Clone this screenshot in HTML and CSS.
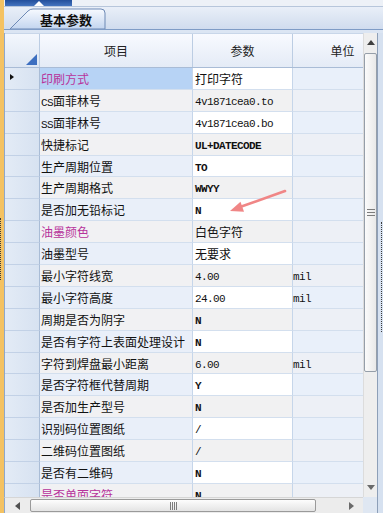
FILE: index.html
```html
<!DOCTYPE html>
<html>
<head>
<meta charset="utf-8">
<link rel="stylesheet" href="styles.css">
</head>
<body>
<div class="window">
  <div class="edge"></div>
  <div class="main">
    <div class="topbar"><div class="bluebar"><span class="caret"></span></div></div>
    <div class="tabstrip">
      <div class="tab">
        <svg class="tabshape" width="98" height="22" viewBox="0 0 98 22">
          <defs>
            <linearGradient id="tg" x1="0" y1="0" x2="0" y2="1">
              <stop offset="0" stop-color="#f7faff"/>
              <stop offset="1" stop-color="#c3d5ef"/>
            </linearGradient>
          </defs>
          <path d="M1 22 L19 4 Q21 2 24 2 L92 2 Q96 2 96 6 L96 22 Z" fill="url(#tg)" stroke="#6d89b5" stroke-width="1"/>
        </svg>
        <span class="tabtext">基本参数</span>
      </div>
    </div>
    <div class="panel">
      <div class="grid">
        <div class="view">
          <div class="hdr">
            <div class="h-rh"><span class="corner"></span></div>
            <div class="h-item">项目</div>
            <div class="h-val">参数</div>
            <div class="h-unit">单位</div>
          </div>
          <div class="rows">
            <div class="row odd"><div class="rh"><span class="ind"></span></div><div class="c-item sel hl">印刷方式</div><div class="c-val">打印字符</div><div class="c-unit"></div></div>
            <div class="row even"><div class="rh"></div><div class="c-item"><span class="m">CS</span>面菲林号</div><div class="c-val"><span class="m">4v1871cea0.to</span></div><div class="c-unit"></div></div>
            <div class="row odd"><div class="rh"></div><div class="c-item"><span class="m">SS</span>面菲林号</div><div class="c-val"><span class="m">4v1871cea0.bo</span></div><div class="c-unit"></div></div>
            <div class="row even"><div class="rh"></div><div class="c-item">快捷标记</div><div class="c-val"><span class="m b">UL+DATECODE</span></div><div class="c-unit"></div></div>
            <div class="row odd"><div class="rh"></div><div class="c-item">生产周期位置</div><div class="c-val"><span class="m b">TO</span></div><div class="c-unit"></div></div>
            <div class="row even"><div class="rh"></div><div class="c-item">生产周期格式</div><div class="c-val"><span class="m b">WWYY</span></div><div class="c-unit"></div></div>
            <div class="row odd"><div class="rh"></div><div class="c-item">是否加无铅标记</div><div class="c-val"><span class="m b">N</span></div><div class="c-unit"></div></div>
            <div class="row even"><div class="rh"></div><div class="c-item hl">油墨颜色</div><div class="c-val">白色字符</div><div class="c-unit"></div></div>
            <div class="row odd"><div class="rh"></div><div class="c-item">油墨型号</div><div class="c-val">无要求</div><div class="c-unit"></div></div>
            <div class="row even"><div class="rh"></div><div class="c-item">最小字符线宽</div><div class="c-val"><span class="m">4.00</span></div><div class="c-unit"><span class="m">mil</span></div></div>
            <div class="row odd"><div class="rh"></div><div class="c-item">最小字符高度</div><div class="c-val"><span class="m">24.00</span></div><div class="c-unit"><span class="m">mil</span></div></div>
            <div class="row even"><div class="rh"></div><div class="c-item">周期是否为阴字</div><div class="c-val"><span class="m b">N</span></div><div class="c-unit"></div></div>
            <div class="row odd"><div class="rh"></div><div class="c-item">是否有字符上表面处理设计</div><div class="c-val"><span class="m b">N</span></div><div class="c-unit"></div></div>
            <div class="row even"><div class="rh"></div><div class="c-item">字符到焊盘最小距离</div><div class="c-val"><span class="m">6.00</span></div><div class="c-unit"><span class="m">mil</span></div></div>
            <div class="row odd"><div class="rh"></div><div class="c-item">是否字符框代替周期</div><div class="c-val"><span class="m b">Y</span></div><div class="c-unit"></div></div>
            <div class="row even"><div class="rh"></div><div class="c-item">是否加生产型号</div><div class="c-val"><span class="m b">N</span></div><div class="c-unit"></div></div>
            <div class="row odd"><div class="rh"></div><div class="c-item">识别码位置图纸</div><div class="c-val"><span class="m">/</span></div><div class="c-unit"></div></div>
            <div class="row even"><div class="rh"></div><div class="c-item">二维码位置图纸</div><div class="c-val"><span class="m">/</span></div><div class="c-unit"></div></div>
            <div class="row odd"><div class="rh"></div><div class="c-item">是否有二维码</div><div class="c-val"><span class="m b">N</span></div><div class="c-unit"></div></div>
            <div class="row even"><div class="rh"></div><div class="c-item hl">是否单面字符</div><div class="c-val"><span class="m b">N</span></div><div class="c-unit"></div></div>
          </div>
        </div>
        <div class="vscroll">
          <div class="vbtn"><span class="arr-up"></span></div>
          <div class="vthumb"><span class="vgrip"></span></div>
          <div class="vtrack"></div>
          <div class="vbtn"><span class="arr-down"></span></div>
        </div>
        <div class="hscroll">
          <div class="hbtn-l"><span class="arr-left"></span></div>
          <div class="hthumb"><span class="hgrip"></span></div>
          <div class="htrack"></div>
          <div class="hbtn-r"><span class="arr-right"></span></div>
        </div>
        <div class="sizegrip"></div>
      </div>
      <div class="rightedge"></div>
    </div>
  </div>
</div>
<svg class="annot" width="383" height="513" viewBox="0 0 383 513">
  <line x1="285" y1="191" x2="240" y2="207" stroke="#f08686" stroke-width="2.6" stroke-linecap="round"/>
  <polygon points="230,211 244,211.8 240.5,201.8" fill="#f08686"/>
</svg>
</body>
</html>
```
FILE: styles.css
```css
html, body {
  margin: 0;
  padding: 0;
}
body {
  width: 383px;
  height: 513px;
  overflow: hidden;
  background: #dbe5f3;
  font-family: "Noto Sans CJK SC", "Liberation Sans", sans-serif;
  font-size: 12px;
  color: #111;
  position: relative;
}
.window {
  display: flex;
  height: 513px;
}
.edge {
  width: 4px;
  flex: none;
  background: #f4c262;
  position: relative;
}
.edge::after {
  content: "";
  position: absolute;
  left: 0;
  top: 218px;
  height: 62px;
  border-left: 1px dotted #3a3a3a;
}
.main {
  flex: 1;
  min-width: 0;
  display: flex;
  flex-direction: column;
}
.topbar {
  height: 6px;
  flex: none;
  display: flex;
  background: #edf1f7;
}
.bluebar {
  width: 67px;
  margin-left: 1px;
  box-sizing: border-box;
  padding-left: 29px;
  display: flex;
  align-items: flex-end;
  background: linear-gradient(#234f9b, #4474bf);
}
.caret {
  width: 0;
  height: 0;
  border-left: 5px solid transparent;
  border-right: 5px solid transparent;
  border-bottom: 5px solid #ffffff;
}
.tabstrip {
  height: 24px;
  flex: none;
  box-sizing: border-box;
  border-top: 1px solid #b7c6db;
  border-bottom: 1px solid #7f9cc6;
  background: linear-gradient(#e9eff8, #d0dcee);
  padding-left: 5px;
  display: flex;
  align-items: flex-end;
}
.tab {
  position: relative;
  width: 98px;
  height: 22px;
  display: flex;
  align-items: center;
}
.tabshape {
  position: absolute;
  left: 0;
  top: 0;
}
.tabtext {
  position: relative;
  padding-left: 31px;
  padding-top: 2px;
  font-weight: bold;
  font-size: 13px;
  color: #101010;
}
.panel {
  flex: 1;
  display: flex;
  padding-top: 3px;
  min-height: 0;
}
.grid {
  display: grid;
  grid-template-columns: 359px 14px;
  grid-template-rows: 464px 16px;
}
.view {
  overflow: hidden;
  border-left: 1px solid #8ea7ca;
  box-sizing: border-box;
  background: #ffffff;
}
.hdr {
  display: flex;
  height: 35px;
  box-sizing: border-box;
  border-bottom: 1px solid #a9bcd6;
  border-top: 1px solid #c8d6e9;
}
.hdr > div {
  flex: none;
  box-sizing: border-box;
  display: flex;
  align-items: center;
  justify-content: center;
  background: linear-gradient(#f8faff, #e4ebf6);
  border-right: 1px solid #bccde3;
  font-size: 12px;
  color: #222;
}
.hdr .h-rh {
  width: 35px;
  justify-content: flex-end;
  align-items: flex-end;
  padding: 0 2px 2px 0;
  background: linear-gradient(#f3f7fd, #dde6f3);
}
.corner {
  width: 0;
  height: 0;
  border-left: 11px solid transparent;
  border-bottom: 11px solid #3d6fc0;
}
.h-item { width: 153px; }
.h-val { width: 100px; }
.h-unit { width: 100px; }
.rows {
  display: flex;
  flex-direction: column;
}
.row {
  display: flex;
  height: 21.9px;
  flex: none;
}
.row > div {
  flex: none;
  box-sizing: border-box;
  height: 100%;
  line-height: 21px;
  border-right: 1px solid #c6d6ea;
  border-bottom: 1px solid #d3dfee;
  white-space: nowrap;
  overflow: hidden;
}
.row > .rh {
  width: 35px;
  display: flex;
  align-items: center;
  background: linear-gradient(90deg, #e3ebf6, #d7e2f1);
  border-right-color: #a9bcd6;
  border-bottom-color: #c2d1e6;
  padding-left: 5px;
}
.ind {
  width: 0;
  height: 0;
  border-top: 3px solid transparent;
  border-bottom: 3px solid transparent;
  border-left: 4px solid #111;
  margin-top: -3px;
}
.c-item {
  width: 153px;
  padding-left: 1px;
}
.c-val {
  width: 100px;
  padding-left: 2px;
}
.c-unit {
  width: 100px;
  padding-left: 0;
}
.odd .c-item { background: #e9eff9; }
.even .c-item { background: #f1f1f3; }
.odd .c-val { background: #ffffff; }
.even .c-val { background: #f1f1f2; }
.odd .c-unit { background: #e9f0fa; }
.even .c-unit { background: #edf0f6; }
.row .c-item.sel { background: #b7d3f5; }
.hl { color: #b7339b; }
.m {
  font-family: "Liberation Mono", monospace;
  font-size: 11px;
  letter-spacing: -0.6px;
  color: #111;
  vertical-align: 1px;
}
.c-item .m { vertical-align: 0; }
.hl .m { color: #b7339b; }
.m.b { font-weight: bold; }
.vscroll {
  display: flex;
  flex-direction: column;
  background: #eeeeee;
  border-left: 1px solid #dcdcdc;
  box-sizing: border-box;
}
.vbtn {
  height: 19px;
  flex: none;
  display: flex;
  align-items: center;
  justify-content: center;
}
.arr-up {
  width: 0;
  height: 0;
  border-left: 4px solid transparent;
  border-right: 4px solid transparent;
  border-bottom: 5px solid #404040;
}
.arr-down {
  width: 0;
  height: 0;
  border-left: 4px solid transparent;
  border-right: 4px solid transparent;
  border-top: 5px solid #6a6a6a;
}
.vthumb {
  height: 319px;
  flex: none;
  margin: 1px 0 0 0;
  box-sizing: border-box;
  border: 1px solid #959ea9;
  border-radius: 2px;
  background: linear-gradient(90deg, #fbfbfb, #e8e8e8);
  display: flex;
  align-items: center;
  justify-content: center;
}
.vgrip {
  width: 8px;
  height: 7px;
  background: repeating-linear-gradient(180deg, #7c7c7c 0 1px, transparent 1px 3px);
}
.vtrack { flex: 1; }
.hscroll {
  display: flex;
  align-items: stretch;
  background: #ececec;
  border-top: 1px solid #d6d6d6;
  border-left: 1px solid #8ea7ca;
  box-sizing: border-box;
}
.hbtn-l {
  width: 25px;
  flex: none;
  display: flex;
  align-items: center;
  justify-content: center;
}
.hbtn-r {
  width: 18px;
  flex: none;
  display: flex;
  align-items: center;
  justify-content: center;
  padding-right: 6px;
  box-sizing: border-box;
}
.arr-left {
  width: 0;
  height: 0;
  border-top: 4px solid transparent;
  border-bottom: 4px solid transparent;
  border-right: 5px solid #505050;
}
.arr-right {
  width: 0;
  height: 0;
  border-top: 4px solid transparent;
  border-bottom: 4px solid transparent;
  border-left: 5px solid #6a6a6a;
}
.hthumb {
  width: 286px;
  flex: none;
  margin: 1px 0;
  box-sizing: border-box;
  border: 1px solid #9a9a9a;
  border-radius: 2px;
  background: linear-gradient(#fdfdfd, #e4e4e4);
  display: flex;
  align-items: center;
  justify-content: center;
}
.hgrip {
  width: 7px;
  height: 8px;
  background: repeating-linear-gradient(90deg, #7c7c7c 0 1px, transparent 1px 2px);
}
.htrack { flex: 1; }
.sizegrip {
  background: #dfe7f2;
}
.rightedge {
  flex: 1;
  position: relative;
  border-left: 1px solid #8d9fb8;
  background: #d6e1f0;
}
.rightedge::after {
  content: "";
  position: absolute;
  left: 3px;
  top: 189px;
  height: 110px;
  border-left: 1px dotted #3a3a3a;
}
.annot {
  position: absolute;
  left: 0;
  top: 0;
  pointer-events: none;
}
```
